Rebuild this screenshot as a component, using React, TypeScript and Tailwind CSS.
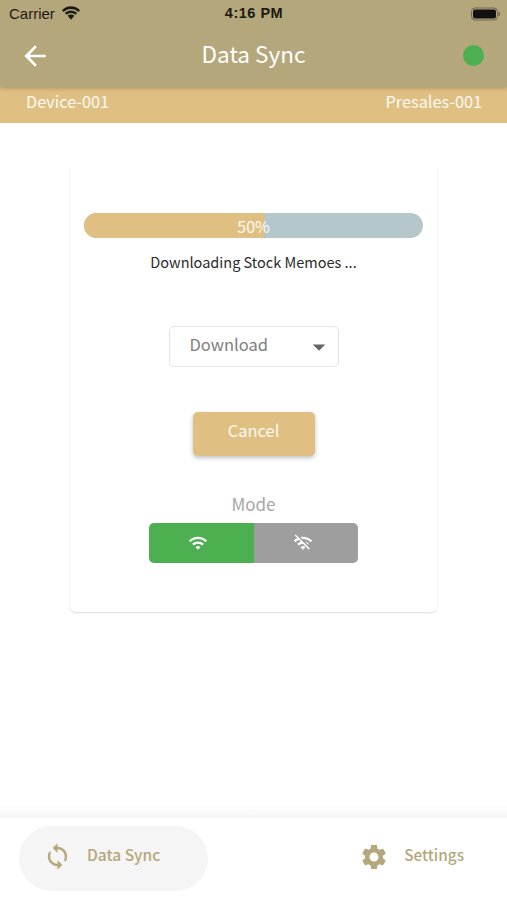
import React from "react";
import { MdArrowBack, MdSync, MdSettings, MdWifi, MdWifiOff, MdArrowDropDown } from "react-icons/md";

export default function App() {
  return (
    <div className="w-[507px] h-[900px] flex flex-col bg-white overflow-hidden [font-family:'Noto_Sans_CJK_SC','Noto_Sans',sans-serif]">
      <header className="relative z-10 h-[87px] bg-[#b5a77c] shadow-[0_2px_4px_rgba(0,0,0,0.18)] flex flex-col shrink-0">
        <div className="h-[28px] relative flex items-center justify-between pl-[9px] pr-[5px] text-[#1c1a14] [font-family:'Liberation_Sans',sans-serif]">
          <div className="flex items-center gap-[7px] relative z-10">
            <span className="text-[15px]">Carrier</span>
            <svg width="18" height="14" viewBox="0 0 19 14" fill="#1c1a14" className="-mt-[2px]">
              <path d="M9.5 0C5.800 0 2.500 1.500 0 4l1.800 1.900C3.800 3.900 6.500 2.700 9.500 2.700s5.700 1.200 7.700 3.200L19 4C16.500 1.500 13.200 0 9.500 0z" />
              <path d="M9.500 4.300c-2.500 0-4.800 1-6.500 2.700l1.800 1.900c1.200-1.200 2.900-2 4.700-2s3.500.8 4.700 2L16 7c-1.700-1.700-4-2.700-6.500-2.700z" />
              <path d="M9.500 8.500c-1.400 0-2.600.5-3.500 1.500l3.500 4 3.500-4c-.9-1-2.100-1.500-3.500-1.500z" />
            </svg>
          </div>
          <span className="absolute left-[1px] right-0 text-center text-[14.500px] font-bold tracking-[0.5px]">4:16 PM</span>
          <svg width="31" height="14" viewBox="0 0 31 14">
            <rect x="0.500" y="1" width="26" height="12" rx="3.500" fill="none" stroke="#6e6650" strokeWidth="1" />
            <rect x="2" y="2.500" width="23" height="9" rx="2" fill="#111" />
            <rect x="27.500" y="5" width="1.500" height="4" rx="0.700" fill="#6e6650" />
          </svg>
        </div>
        <div className="flex-1 relative flex items-center justify-between pl-[19px] pr-[23px] pb-[4px]">
          <MdArrowBack className="text-white w-[32px] h-[32px]" />
          <span className="absolute left-0 right-0 text-center text-white text-[22.500px] leading-none pb-[5px]">Data Sync</span>
          <span className="w-[21px] h-[21px] rounded-full bg-[#4caf50]" />
        </div>
      </header>

      <div className="h-[36px] shrink-0 bg-[#dfc082] flex items-center justify-between pl-[26px] pr-[25px] pb-[7px] text-[16.300px] text-white/90">
        <span>Device-001</span>
        <span>Presales-001</span>
      </div>

      <main className="flex-1 flex flex-col items-center pt-[45px]">
        <section className="w-[367px] h-[444px] bg-white rounded-b-[6px] shadow-[0_1px_2px_rgba(0,0,0,0.14)] flex flex-col items-center pt-[45px]">
          <div className="relative w-[339px] h-[25px] rounded-full bg-[#b5c7cb] overflow-hidden flex items-center justify-center">
            <div className="absolute left-0 top-0 bottom-0 w-[180px] bg-[#dfc082]" />
            <span className="relative text-white/90 text-[16px] leading-none">50%</span>
          </div>
          <p className="mt-[14px] text-[14.500px] leading-[20px] text-[#2b2b2b]">Downloading Stock Memoes ...</p>

          <div className="mt-[54px] w-[170px] h-[41px] rounded-[5px] border border-[#e4e4e4] flex items-center justify-between pl-[20px] pr-[4px]">
            <span className="text-[16.500px] text-[#808080] leading-none -mt-[5px]">Download</span>
            <MdArrowDropDown className="w-[30px] h-[30px] text-[#666]" />
          </div>

          <button className="mt-[45px] w-[122px] h-[44px] rounded-[5px] bg-[#dfc082] text-white/90 text-[16.500px] leading-none pb-[7px] shadow-[0_2px_4px_rgba(0,0,0,0.25)]">
            Cancel
          </button>

          <p className="mt-[36px] text-[17px] leading-[24px] text-[#a6a6a6]">Mode</p>
          <div className="mt-[7px] w-[209px] h-[40px] rounded-[5px] overflow-hidden flex">
            <div className="w-[105px] bg-[#4caf50] flex items-center justify-center pr-[7px]">
              <MdWifi className="w-[20px] h-[20px] text-white" />
            </div>
            <div className="flex-1 bg-[#9e9e9e] flex items-center justify-center pr-[6px]">
              <MdWifiOff className="w-[20px] h-[20px] text-white" />
            </div>
          </div>
        </section>
      </main>

      <div className="h-[14px] shrink-0 bg-gradient-to-b from-white to-[#f6f6f6]" />
      <footer className="h-[82px] shrink-0 bg-white flex items-start justify-between pl-[19px] pr-[43px] pt-[8px]">
        <div className="w-[189px] h-[65px] rounded-full bg-[#f5f5f5] flex items-center pl-[24px] pb-[4px] gap-[15px]">
          <MdSync className="w-[29px] h-[29px] text-[#b5a77c]" />
          <span className="text-[15.500px] font-medium text-[#b5a77c] leading-none -mt-[4px]">Data Sync</span>
        </div>
        <div className="h-[65px] flex items-center pb-[4px] gap-[15px]">
          <MdSettings className="w-[30px] h-[30px] text-[#b5a77c]" />
          <span className="text-[15.300px] font-medium text-[#b5a77c] leading-none -mt-[4px]">Settings</span>
        </div>
      </footer>
    </div>
  );
}
